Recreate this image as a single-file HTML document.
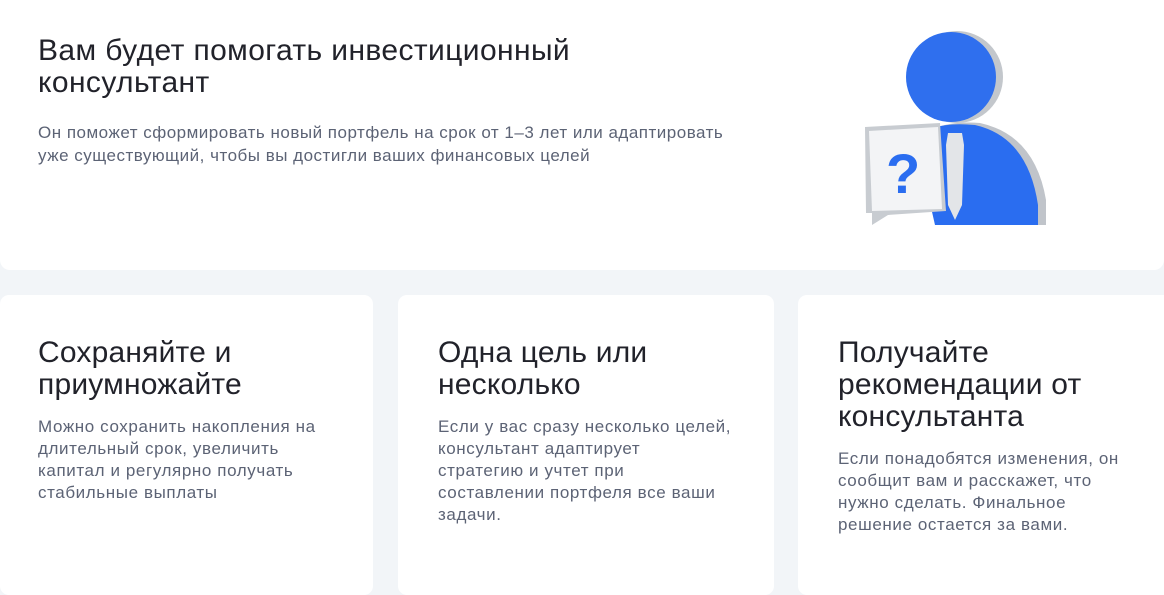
<!DOCTYPE html>
<html><head><meta charset="utf-8"><style>
*{margin:0;padding:0;box-sizing:border-box}
body{width:1164px;height:570px;overflow:hidden;background:#f2f5f8;font-family:"Liberation Sans",sans-serif;position:relative}
.top{position:absolute;left:0;top:0;width:1164px;height:270px;background:#fff;border-radius:0 0 10px 10px}
h1{position:absolute;left:38px;top:35px;font-size:30px;line-height:32px;font-weight:400;color:#21222a;white-space:nowrap;letter-spacing:0.4px}
.sub{position:absolute;left:38px;top:121px;font-size:17px;line-height:23px;color:#5c6375;white-space:nowrap;letter-spacing:0.5px}
.card{position:absolute;top:295px;height:300px;background:#fff;border-radius:9px}
.card h2{font-size:30px;line-height:32px;font-weight:400;color:#21222a;white-space:nowrap;letter-spacing:0.2px}
.card p{font-size:17px;line-height:22px;color:#5c6375;white-space:nowrap;letter-spacing:0.6px;margin-top:15px}
.in{position:absolute;top:42px}
</style></head><body>
<div class="top">
<h1>Вам будет помогать инвестиционный<br>консультант</h1>
<div class="sub">Он поможет сформировать новый портфель на срок от 1–3 лет или адаптировать<br>уже существующий, чтобы вы достигли ваших финансовых целей</div>
<svg style="position:absolute;left:860px;top:25px" width="200" height="210" viewBox="0 0 200 210">
<circle cx="97" cy="52" r="46" fill="#c3c7cc"/>
<circle cx="91" cy="52" r="45" fill="#2f6fee"/>
<path d="M60 112 Q80 95 120 98 Q175 110 186 175 L186 200 L80 200 Z" fill="#c0c4ca"/>
<path d="M55 112 Q75 96 115 100 Q168 112 178 180 L178 200 L75 200 Z" fill="#2a6df0"/>
<path d="M88 108 L102 108 L104 120 L102 180 L95 195 L88 180 L86 120 Z" fill="#e3e5e8"/>
<path d="M5 102 L80 98 L86 186 L28 190 L12 200 L12 188 L6 188 Z" fill="#c8ccd1"/>
<path d="M9 106 L78 102 L82 184 L12 186 Z" fill="#f3f4f6"/>
<text x="26" y="168" font-size="56" font-weight="700" fill="#2a6df0" font-family="Liberation Sans,sans-serif">?</text>
</svg>
</div>
<div class="card" style="left:0;width:373px"><div class="in" style="left:38px"><h2>Сохраняйте и<br>приумножайте</h2><p>Можно сохранить накопления на<br>длительный срок, увеличить<br>капитал и регулярно получать<br>стабильные выплаты</p></div></div>
<div class="card" style="left:398px;width:376px"><div class="in" style="left:40px"><h2>Одна цель или<br>несколько</h2><p>Если у вас сразу несколько целей,<br>консультант адаптирует<br>стратегию и учтет при<br>составлении портфеля все ваши<br>задачи.</p></div></div>
<div class="card" style="left:798px;width:380px"><div class="in" style="left:40px"><h2>Получайте<br>рекомендации от<br>консультанта</h2><p>Если понадобятся изменения, он<br>сообщит вам и расскажет, что<br>нужно сделать. Финальное<br>решение остается за вами.</p></div></div>
</body></html>
